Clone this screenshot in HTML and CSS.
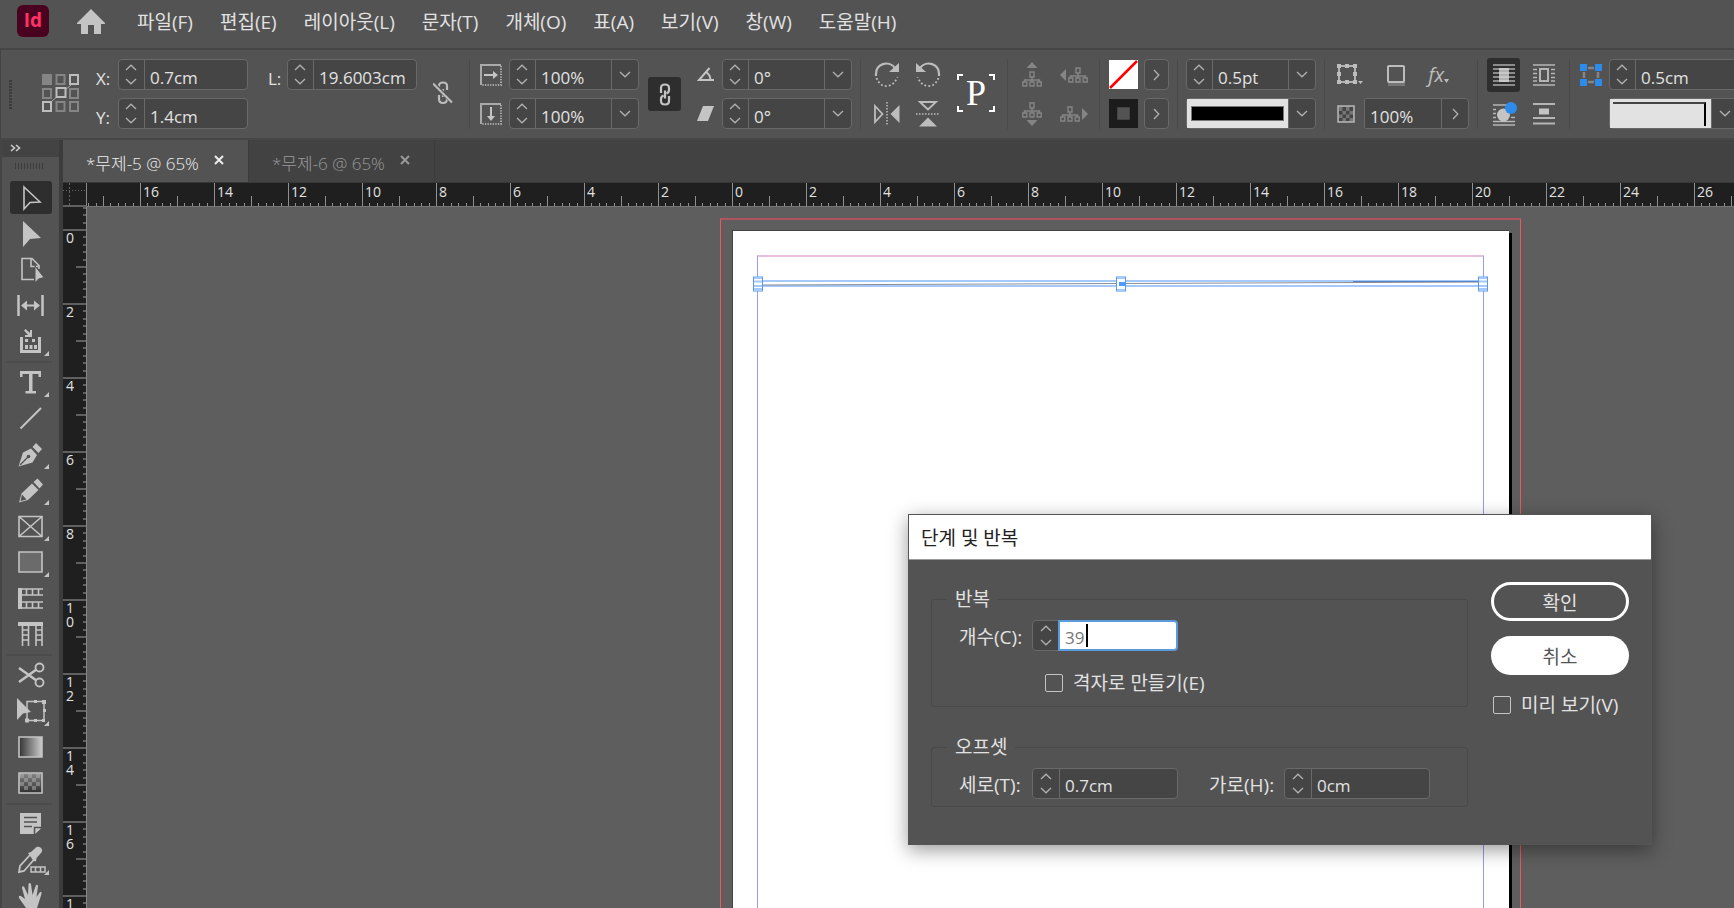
FILE: index.html
```html
<!DOCTYPE html>
<html lang="ko">
<head>
<meta charset="utf-8">
<title>단계 및 반복</title>
<link rel="stylesheet" href="styles.css">
</head>
<body>
<svg class="defs" aria-hidden="true">
  <symbol id="up" viewBox="0 0 12 7"><path d="M1 6L6 1.2L11 6" fill="none" stroke="currentColor" stroke-width="1.3"/></symbol>
  <symbol id="down" viewBox="0 0 12 7"><path d="M1 1L6 5.8L11 1" fill="none" stroke="currentColor" stroke-width="1.3"/></symbol>
  <symbol id="right" viewBox="0 0 7 12"><path d="M1 1L5.8 6L1 11" fill="none" stroke="currentColor" stroke-width="1.3"/></symbol>
  <symbol id="tree" viewBox="0 0 20 16"><path d="M8 1h4v5H8zM10 6v5M2.500 11V9h15v2M.8 11h4v4h-4zM8 11h4v4H8zM15.200 11h4v4h-4z" fill="none" stroke="currentColor" stroke-width="1.4"/></symbol>
  <symbol id="corner" viewBox="0 0 42 33"><path d="M39 26v5h-5z" fill="currentColor"/></symbol>
  <symbol id="close" viewBox="0 0 10 10"><path d="M1 1L9 9M9 1L1 9" stroke="currentColor" stroke-width="2"/></symbol>
</svg>

<header class="menubar">
  <div class="logo">Id</div>
  <button class="home" aria-label="홈"><svg width="28" height="25" viewBox="0 0 28 25"><path d="M14 0L28 14V15H24V25H17V16H11V25H4V15H0V14Z" fill="currentColor"/></svg></button>
  <nav class="menus">
    <button>파일(F)</button><button>편집(E)</button><button>레이아웃(L)</button><button>문자(T)</button><button>개체(O)</button><button>표(A)</button><button>보기(V)</button><button>창(W)</button><button>도움말(H)</button>
  </nav>
</header>

<section class="control">
  <div class="grip"></div>
  <svg class="refpoint" width="38" height="39" viewBox="0 0 38 39" fill="none" stroke-width="2">
    <path d="M10 27L29 11" stroke="#aaa" stroke-width="1"/>
    <g stroke="#858585" fill="#535353"><rect x="1" y="1" width="8" height="9" fill="#858585"/><rect x="14.500" y="1" width="8" height="9"/><rect x="1" y="15" width="8" height="9"/><rect x="28" y="15" width="8" height="9"/><rect x="14.500" y="28" width="8" height="9"/><rect x="28" y="28" width="8" height="9"/></g>
    <g stroke="#bdbdbd" fill="#535353"><rect x="28" y="1" width="8" height="9"/><rect x="14.500" y="14" width="9" height="9"/><rect x="1" y="28" width="8" height="9"/></g>
  </svg>
  <div class="group g-pos">
    <label for="x">X:</label>
    <div class="field"><div class="spin"><button aria-label="X 증가"><svg><use href="#up"/></svg></button><button aria-label="X 감소"><svg><use href="#down"/></svg></button></div><input id="x" value="0.7cm"></div>
    <label for="y">Y:</label>
    <div class="field"><div class="spin"><button aria-label="Y 증가"><svg><use href="#up"/></svg></button><button aria-label="Y 감소"><svg><use href="#down"/></svg></button></div><input id="y" value="1.4cm"></div>
  </div>
  <div class="group g-len">
    <label for="l">L:</label>
    <div class="field"><div class="spin"><button aria-label="L 증가"><svg><use href="#up"/></svg></button><button aria-label="L 감소"><svg><use href="#down"/></svg></button></div><input id="l" value="19.6003cm"></div>
  </div>
  <button class="bare unlink" aria-label="비율 유지 안 함"><svg width="20" height="24" viewBox="0 0 20 24" fill="none" stroke="currentColor" stroke-width="2.200"><path d="M6 9V5Q6 1.500 10 1.500T14 5V9M6 14v4q0 4 4 4t4-4v-4M10 8v8"/><path d="M0 2L19 21" stroke="#535353" stroke-width="4"/><path d="M0 2.500L19 21.500"/></svg></button>
  <div class="sep s-len"></div>
  <div class="group g-scale">
    <svg width="22" height="22" viewBox="0 0 22 22"><path d="M1 21V1H21" fill="none" stroke="#aaa" stroke-width="2"/><path d="M21 2V21H2" fill="none" stroke="#aaa" stroke-width="2" stroke-dasharray="1.300 1.300"/><path d="M4 10h9V7l5 4-5 4v-3H4z" fill="#c4c4c4"/></svg>
    <div class="field"><div class="spin"><button aria-label="가로 비율 증가"><svg><use href="#up"/></svg></button><button aria-label="가로 비율 감소"><svg><use href="#down"/></svg></button></div><input aria-label="X 비율" value="100%"><button class="drop" aria-label="가로 비율 목록"><svg><use href="#down"/></svg></button></div>
    <svg width="22" height="22" viewBox="0 0 22 22"><path d="M1 21V1H21" fill="none" stroke="#aaa" stroke-width="2"/><path d="M21 2V21H2" fill="none" stroke="#aaa" stroke-width="2" stroke-dasharray="1.300 1.300"/><path d="M10 4v9H7l4 5 4-5h-3V4z" fill="#c4c4c4"/></svg>
    <div class="field"><div class="spin"><button aria-label="세로 비율 증가"><svg><use href="#up"/></svg></button><button aria-label="세로 비율 감소"><svg><use href="#down"/></svg></button></div><input aria-label="Y 비율" value="100%"><button class="drop" aria-label="세로 비율 목록"><svg><use href="#down"/></svg></button></div>
  </div>
  <button class="on link" aria-label="비율 유지"><svg width="12" height="23" viewBox="0 0 12 23" fill="none" stroke="currentColor" stroke-width="2.200"><path d="M2 10V5Q2 1.500 6 1.500T10 5V7Q10 9.500 7.500 10.500M10 13v5q0 3.500-4 3.500T2 18v-2q0-2.500 2.500-3.500M6 7.500v8"/></svg></button>
  <div class="group g-angle">
    <svg width="18" height="15" viewBox="0 0 18 15" fill="none" stroke="#c4c4c4" stroke-width="2"><path d="M17 13H2L12.500 1M9 5Q13.500 8 13.500 13"/></svg>
    <div class="field"><div class="spin"><button aria-label="회전 증가"><svg><use href="#up"/></svg></button><button aria-label="회전 감소"><svg><use href="#down"/></svg></button></div><input aria-label="회전 각도" value="0°"><button class="drop" aria-label="회전 목록"><svg><use href="#down"/></svg></button></div>
    <svg width="18" height="15" viewBox="0 0 18 15"><path d="M6 0H17L11 15H0Z" fill="#c4c4c4"/></svg>
    <div class="field"><div class="spin"><button aria-label="기울이기 증가"><svg><use href="#up"/></svg></button><button aria-label="기울이기 감소"><svg><use href="#down"/></svg></button></div><input aria-label="기울이기 각도" value="0°"><button class="drop" aria-label="기울이기 목록"><svg><use href="#down"/></svg></button></div>
  </div>
  <div class="sep s-angle"></div>
  <div class="group g-rotate">
    <button class="bare" aria-label="시계 방향 회전"><svg width="26" height="26" viewBox="0 0 26 26" fill="none" stroke="currentColor" stroke-width="2.200"><path d="M2 14C1 1 15-2 21 6"/><path d="M25 1V10H15Z" fill="currentColor" stroke="none"/><path d="M2.500 16Q6 24.500 13 24T23.500 15" stroke-width="1.800" stroke-dasharray="1.800 2.200"/></svg></button>
    <button class="bare" aria-label="시계 반대 방향 회전"><svg width="26" height="26" viewBox="0 0 26 26"><g transform="matrix(-1 0 0 1 26 0)" fill="none" stroke="currentColor" stroke-width="2.200"><path d="M2 14C1 1 15-2 21 6"/><path d="M25 1V10H15Z" fill="currentColor" stroke="none"/><path d="M2.500 16Q6 24.500 13 24T23.500 15" stroke-width="1.800" stroke-dasharray="1.800 2.200"/></g></svg></button>
    <button class="bare" aria-label="가로로 뒤집기"><svg width="26" height="26" viewBox="0 0 26 26"><path d="M1 5L8.500 13L1 21Z" fill="none" stroke="currentColor" stroke-width="1.800"/><path d="M25.500 4V22L16.500 13Z" fill="currentColor"/><path d="M13 1V25" stroke="currentColor" stroke-width="1.500" stroke-dasharray="1.500 1.500"/></svg></button>
    <button class="bare" aria-label="세로로 뒤집기"><svg width="26" height="26" viewBox="0 0 26 26"><path d="M5 1L13 8.500L21 1Z" fill="none" stroke="currentColor" stroke-width="1.800"/><path d="M4 25.500H22L13 16.500Z" fill="currentColor"/><path d="M1 13H25" stroke="currentColor" stroke-width="1.500" stroke-dasharray="1.500 1.500"/></svg></button>
  </div>
  <div class="pmark"><span>P</span><svg width="38" height="38" viewBox="0 0 38 38" fill="none" stroke="#fff" stroke-width="2"><path d="M1 6V1H6M32 1H37V6M37 32V37H32M6 37H1V32"/></svg></div>
  <div class="sep s-p"></div>
  <div class="group g-tree">
    <button class="bare dim" aria-label="컨테이너 선택"><svg width="20" height="26" viewBox="0 0 20 26"><path d="M10 0L15.500 6H4.500Z" fill="currentColor"/><use href="#tree" y="9" width="20" height="16"/></svg></button>
    <button class="bare dim" aria-label="이전 개체 선택"><svg width="28" height="18" viewBox="0 0 28 18"><path d="M0 9L6 3V15Z" fill="currentColor"/><use href="#tree" x="8" y="1" width="20" height="16"/></svg></button>
    <button class="bare dim" aria-label="내용 선택"><svg width="20" height="26" viewBox="0 0 20 26"><path d="M10 25L15.500 19H4.500Z" fill="currentColor"/><use href="#tree" y="1" width="20" height="16"/></svg></button>
    <button class="bare dim" aria-label="다음 개체 선택"><svg width="28" height="18" viewBox="0 0 28 18"><path d="M28 9L22 3V15Z" fill="currentColor"/><use href="#tree" y="1" width="20" height="16"/></svg></button>
  </div>
  <div class="sep s-tree"></div>
  <div class="group g-paint">
    <button class="swatch" aria-label="칠"><svg width="29" height="29" viewBox="0 0 29 29"><path d="M0 0H29V29H0Z" fill="#fff"/><path d="M1 28L28 1" stroke="#f00" stroke-width="2.500"/></svg></button>
    <button class="more" aria-label="칠 옵션"><svg><use href="#right"/></svg></button>
    <button class="swatch" aria-label="획"><svg width="29" height="29" viewBox="0 0 29 29"><path d="M0 0H29V29H0Z" fill="#1c1c1c"/><path d="M8.500 8.500H20.500V20.500H8.500Z" fill="#535353" stroke="#444"/></svg></button>
    <button class="more" aria-label="획 옵션"><svg><use href="#right"/></svg></button>
  </div>
  <div class="sep s-paint"></div>
  <div class="group g-stroke">
    <div class="field"><div class="spin"><button aria-label="두께 증가"><svg><use href="#up"/></svg></button><button aria-label="두께 감소"><svg><use href="#down"/></svg></button></div><input aria-label="획 두께" value="0.5pt"><button class="drop" aria-label="두께 목록"><svg><use href="#down"/></svg></button></div>
    <div class="field"><div class="preview"><div class="solid"></div></div><button class="drop" aria-label="획 유형"><svg><use href="#down"/></svg></button></div>
  </div>
  <div class="sep s-stroke"></div>
  <div class="effects">
    <div class="fxrow">
      <button class="bare" aria-label="효과 대상"><svg width="26" height="22" viewBox="0 0 26 22"><rect x="2" y="2" width="16" height="16" fill="none" stroke="currentColor" stroke-width="1.800"/><path d="M0 0h4v4H0zM8 0h4v4H8zM16 0h4v4h-4zM0 8h4v4H0zM16 8h4v4h-4zM0 16h4v4H0zM8 16h4v4H8zM16 16h4v4h-4z" fill="currentColor"/><path d="M4 4H16V16H4Z" fill="#535353"/><path d="M21 17h5l-2.500 3z" fill="currentColor"/></svg></button>
      <button class="bare" aria-label="그림자"><svg width="20" height="22" viewBox="0 0 20 22"><path d="M2 18H19V22H2z" fill="#777"/><rect x="2" y="2" width="16" height="16" rx="1" fill="#535353" stroke="currentColor" stroke-width="2"/></svg></button>
      <button class="bare fx" aria-label="효과"><i>fx</i><svg width="5" height="4" viewBox="0 0 5 4"><path d="M0 0h5l-2.500 4z" fill="currentColor"/></svg></button>
    </div>
    <div class="fxrow">
      <svg width="18" height="18" viewBox="0 0 18 18"><rect x="1" y="1" width="16" height="16" fill="#777" stroke="#b5b5b5" stroke-width="1.500"/><path d="M5.500 2h3.500v4H5.500zM12.500 2H16v4h-3.500zM2 6h3.500v3.500H2zM9 6h3.500v3.500H9zM5.500 9.500H9V13H5.500zM12.500 9.500H16V13h-3.500zM2 13h3.500v3H2zM9 13h3.500v3H9z" fill="#444"/></svg>
      <div class="field f-op"><input aria-label="불투명도" value="100%"><button class="drop" aria-label="불투명도 조절"><svg class="r"><use href="#right"/></svg></button></div>
    </div>
  </div>
  <div class="sep s-fx"></div>
  <div class="group g-wrap">
    <button class="on" aria-label="감싸기 없음"><svg width="22" height="22" viewBox="0 0 22 22"><path d="M0 1H22M0 5H22M0 9H22M0 13H22M0 17H22M0 21H22" stroke="#aaa" stroke-width="1.600"/><path d="M6 5H16M6 9H16M6 13H16M6 17H16M6 7H16M6 11H16M6 15H16" stroke="#ddd" stroke-width="1.300"/></svg></button>
    <button class="bare" aria-label="테두리 감싸기"><svg width="22" height="22" viewBox="0 0 22 22"><path d="M0 1H22M0 21H22M0 5.500H4M0 9.500H4M0 13.500H4M0 17H4M18 5.500H22M18 9.500H22M18 13.500H22M18 17H22" stroke="#b5b5b5" stroke-width="1.600"/><rect x="7" y="5" width="8" height="12" fill="none" stroke="#b5b5b5" stroke-width="2"/></svg></button>
    <button class="bare" aria-label="모양 감싸기"><svg width="26" height="25" viewBox="0 0 26 25"><path d="M2 4H16M2 8.500H5M2 12.500H5M2 16.500H5M2 20.500H24M2 24H24M20 16.500H24" stroke="#b5b5b5" stroke-width="1.600"/><circle cx="12.500" cy="14" r="6.500" fill="#c4c4c4"/><circle cx="20" cy="7" r="6" fill="#2d8ceb"/></svg></button>
    <button class="bare" aria-label="개체 건너뛰기"><svg width="22" height="22" viewBox="0 0 22 22"><path d="M0 1H22M0 15H22M0 20.500H22" stroke="#b5b5b5" stroke-width="2"/><path d="M6 5.500h10v6H6z" fill="#c4c4c4"/></svg></button>
  </div>
  <div class="sep s-wrap"></div>
  <svg class="cornerico" width="22" height="22" viewBox="0 0 22 22"><path d="M8 4h6M8 18h6M4 8v6M18 8v6" stroke="#858585" stroke-width="2.500"/><path d="M0 0h7v7H0zM15 0h7v7h-7zM0 15h7v7H0zM15 15h7v7h-7z" fill="#2d8ceb"/></svg>
  <div class="group g-corner">
    <div class="field wide"><div class="spin"><button aria-label="모퉁이 증가"><svg><use href="#up"/></svg></button><button aria-label="모퉁이 감소"><svg><use href="#down"/></svg></button></div><input aria-label="모퉁이 크기" value="0.5cm"></div>
    <div class="field"><div class="preview"><div class="bend"></div></div><button class="drop" aria-label="모퉁이 모양"><svg><use href="#down"/></svg></button></div>
  </div>
</section>

<main class="workspace">
  <aside class="tools">
    <div class="toolhead"><svg width="11" height="8" viewBox="0 0 11 8"><path d="M1 1L4.500 4L1 7M6 1L9.500 4L6 7" fill="none" stroke="#ccc" stroke-width="1.600"/></svg></div>
    <div class="toolgrip"></div>
    <div class="toollist">
      <button class="active" aria-label="선택 도구"><svg viewBox="0 0 42 33"><path d="M14 6V28L20 21.500L30 21Z" fill="none" stroke="currentColor" stroke-width="1.600"/></svg></button>
      <button aria-label="직접 선택 도구"><svg viewBox="0 0 42 33"><path d="M13 4V30L20 22L31 21Z" fill="currentColor"/></svg></button>
      <button aria-label="페이지 도구"><svg viewBox="0 0 42 33"><path d="M24 26.500H12V5.500H22L29 12.500V16M21 5.500V13.500H29" fill="none" stroke="currentColor" stroke-width="1.600"/><path d="M25 13V30L28.500 26L34 24.500Z" fill="currentColor" stroke="#535353"/></svg></button>
      <button aria-label="간격 도구"><svg viewBox="0 0 42 33"><path d="M8.500 6V27M32.500 6V27" stroke="currentColor" stroke-width="2.500"/><path d="M11 16.500L17 11.500V15.500H24V11.500L30 16.500L24 21.500V17.500H17V21.500Z" fill="currentColor"/></svg></button>
      <button aria-label="내용 수집 도구"><svg viewBox="0 0 42 33"><path d="M11.500 12V26.500H29.500V12" fill="none" stroke="currentColor" stroke-width="3"/><path d="M15 14h3v3h-3zM22 14h3v3h-3zM15 20h3v4h-3zM19.500 20h3v4h-3zM24 20h3v4h-3zM14 5.500L15.500 4L20 8V5H22V12H15V10H18Z" fill="currentColor"/><use href="#corner"/></svg></button>
      <hr>
      <button aria-label="문자 도구"><svg viewBox="0 0 42 33"><path d="M10 5H31V11H28.500V8H22.500V25H26V27.500H15.500V25H19V8H12.500V11H10Z" fill="currentColor"/><use href="#corner"/></svg></button>
      <button aria-label="선 도구"><svg viewBox="0 0 42 33"><path d="M10.500 26.500L31 6" stroke="currentColor" stroke-width="2"/></svg></button>
      <button aria-label="펜 도구"><svg viewBox="0 0 42 33"><path d="M8.500 28.500L13 14.500L21 10.500L27 17L22.500 24.500Z" fill="currentColor"/><path d="M10 27L18 19" stroke="#535353" stroke-width="1.300"/><circle cx="18.500" cy="18.500" r="1.800" fill="#535353"/><path d="M22.500 9L26 5L32 11L28.500 15Z" fill="currentColor"/><use href="#corner"/></svg></button>
      <button aria-label="연필 도구"><svg viewBox="0 0 42 33"><path d="M9 28.500L11.500 19.500L22 9.500L28.500 16L18 26Z" fill="currentColor"/><path d="M12 20.500L16.500 25.500L10.500 27Z" fill="#535353"/><path d="M23.500 8L27.500 4.500L33 10.500L29.500 14.500Z" fill="currentColor"/><use href="#corner"/></svg></button>
      <button aria-label="사각형 프레임 도구"><svg viewBox="0 0 42 33"><path d="M9 6.500H32V26.500H9ZM9 6.500L32 26.500M32 6.500L9 26.500" fill="none" stroke="currentColor" stroke-width="1.600"/><use href="#corner"/></svg></button>
      <button aria-label="사각형 도구"><svg viewBox="0 0 42 33"><path d="M9 6H32V26H9Z" fill="#6b6b6b" stroke="currentColor" stroke-width="1.600"/><use href="#corner"/></svg></button>
      <button aria-label="가로 격자 도구"><svg viewBox="0 0 42 33"><path d="M8 6H12V27H8Z" fill="currentColor"/><path d="M12 7H33M12 13H33M12 20H33M12 26H33M16.500 7V13M22.500 7V13M28.500 7V13M16.500 20V26M22.500 20V26M28.500 20V26" stroke="currentColor" stroke-width="1.600"/></svg></button>
      <button aria-label="세로 격자 도구"><svg viewBox="0 0 42 33"><path d="M8 4H33V8H8Z" fill="currentColor"/><path d="M12.500 8V28M18.500 8V28M26 8V28M32 8V28M12.500 12H18.500M12.500 17H18.500M12.500 22H18.500M26 12H32M26 17H32M26 22H32" stroke="currentColor" stroke-width="1.600"/></svg></button>
      <hr>
      <button aria-label="가위 도구"><svg viewBox="0 0 42 33" fill="none" stroke="currentColor"><circle cx="29.500" cy="8.500" r="4" stroke-width="1.800"/><circle cx="29.500" cy="23.500" r="4" stroke-width="1.800"/><path d="M9 9L26.500 21.500M9 23L26.500 10.500" stroke-width="2.600"/></svg></button>
      <button aria-label="자유 변형 도구"><svg viewBox="0 0 42 33"><path d="M17 6.500H34V25.500H17Z" fill="none" stroke="currentColor" stroke-width="1.500"/><path d="M15 23.500h4v4h-4zM24 24h3v3h-3zM32 24h3v3h-3zM32 5h4v4h-4zM33 14h3v3h-3zM24 5h3v3h-3z" fill="currentColor"/><path d="M7 3V25L13 18.500L21 17Z" fill="currentColor"/><use href="#corner"/></svg></button>
      <button aria-label="그레이디언트 도구"><svg viewBox="0 0 42 33"><defs><linearGradient id="g1"><stop offset="0" stop-color="#333"/><stop offset="1" stop-color="#ccc"/></linearGradient><linearGradient id="g2" x2="0" y2="1"><stop offset="0" stop-color="#888"/><stop offset="1" stop-color="#2e2e2e"/></linearGradient></defs><path d="M9 6H32V26H9Z" fill="url(#g1)" stroke="currentColor" stroke-width="1.600"/></svg></button>
      <button aria-label="그레이디언트 페더 도구"><svg viewBox="0 0 42 33"><path d="M9 6H32V26H9Z" fill="url(#g2)" stroke="currentColor" stroke-width="1.600"/><path d="M10 7h4v4h-4zM18 7h4v4h-4zM26 7h4v4h-4zM14 11h4v4h-4zM22 11h4v4h-4zM10 15h4v4h-4zM18 15h4v4h-4zM26 15h4v4h-4zM14 19h4v4h-4zM22 19h4v4h-4z" fill="#bbb" opacity=".45"/></svg></button>
      <hr>
      <button aria-label="메모 도구"><svg viewBox="0 0 42 33"><path d="M10 5H31V20L25 26H10Z" fill="currentColor"/><path d="M14 9.500H27M14 14H27M14 18.500H22M24.500 26V19.500H31" stroke="#535353" stroke-width="1.500" fill="none"/><path d="M26 25V21H30.500Z" fill="currentColor"/></svg></button>
      <button aria-label="스포이드 도구"><svg viewBox="0 0 42 33"><path d="M20 11L10 22L9 28L14 27L24 15.500" fill="none" stroke="currentColor" stroke-width="1.800"/><path d="M18 9L21 8L26.500 3Q30 2 31.500 4.500Q33 7 31 9L26.500 14L26 17.500L23.500 17Z" fill="currentColor"/><path d="M21 23H35V28H21ZM25.500 23V28M30.500 23V28" fill="none" stroke="currentColor" stroke-width="1.500"/><use href="#corner"/></svg></button>
      <button aria-label="손 도구"><svg viewBox="0 0 42 33"><path d="M16 28L9 18Q8 15 11 16L15 19L12 8Q12 5.500 14 6.500L18 15L18.500 4Q19.500 2 21 4L22.500 15L26 5Q28 4 28 6.500L26.500 17L30 12Q32 11 31.500 14L27 28Z" fill="currentColor"/></svg></button>
    </div>
  </aside>

  <section class="document">
    <div class="tabs">
      <div class="tab current"><span>*무제-5 @ 65%</span><button aria-label="무제-5 닫기"><svg width="10" height="10"><use href="#close"/></svg></button></div>
      <div class="tab"><span>*무제-6 @ 65%</span><button aria-label="무제-6 닫기"><svg width="10" height="10"><use href="#close"/></svg></button></div>
    </div>
    <div class="view">
      <div class="origin"></div>
      <div class="hruler">
        <svg class="ticks" width="100%" height="24"><defs><pattern id="ht" x="53" width="74" height="24" patternUnits="userSpaceOnUse"><path d="M.5 0V24M37.500 13V24M7.500 20V24M15.500 20V24M22.500 20V24M30.500 20V24M44.500 20V24M52.500 20V24M59.500 20V24M67.500 20V24" stroke="#909090"/></pattern></defs><rect width="100%" height="24" fill="url(#ht)"/></svg>
        <div class="nums"><span>16</span><span>14</span><span>12</span><span>10</span><span>8</span><span>6</span><span>4</span><span>2</span><span>0</span><span>2</span><span>4</span><span>6</span><span>8</span><span>10</span><span>12</span><span>14</span><span>16</span><span>18</span><span>20</span><span>22</span><span>24</span><span>26</span></div>
      </div>
      <div class="vruler">
        <svg class="ticks" width="23" height="100%"><defs><pattern id="vt" y="22" width="23" height="74" patternUnits="userSpaceOnUse"><path d="M0 1H23M13 38H23M20 8H23M20 16H23M20 23H23M20 31H23M20 45H23M20 53H23M20 60H23M20 68H23" stroke="#606060" stroke-width="2"/></pattern></defs><rect width="23" height="100%" fill="url(#vt)"/></svg>
        <div class="nums"><span>0</span><span>2</span><span>4</span><span>6</span><span>8</span><span>10</span><span>12</span><span>14</span><span>16</span><span>18</span></div>
      </div>
      <div class="canvas">
        <div class="bleed"></div>
        <div class="page"></div>
        <div class="margins"></div>
        <svg class="selection" width="736" height="16" viewBox="0 0 736 16">
          <path d="M5 5H731M5 10H731" stroke="#a5c9fb" stroke-width="2"/>
          <path d="M10 9L731 6" stroke="#8a8d96" stroke-width="1"/>
          <path d="M600 5.500H726" stroke="#5a84c4" stroke-width="1"/>
          <g fill="#fff" stroke="#5599f5"><rect x=".5" y="1" width="9" height="14"/><rect x="363.500" y="1" width="9" height="14"/><rect x="725.500" y="1" width="9" height="14"/></g>
          <path d="M1 2H9M1 5.500H9M1 10H9M1 13H9M726 2H734M726 5.500H734M726 10H734M726 13H734M364 2H372M364 14H372" stroke="#a5c9fb" stroke-width="2"/>
          <path d="M366 6H372V10H366Z" fill="#4f9bff"/>
        </svg>
      </div>
    </div>
  </section>
</main>

<form class="dialog" role="dialog" aria-labelledby="dt">
  <h1 id="dt">단계 및 반복</h1>
  <div class="dbody">
    <div class="sets">
      <fieldset class="repeat">
        <legend>반복</legend>
        <div class="line"><label for="cnt">개수(C):</label>
          <div class="field focus"><div class="spin"><button type="button" aria-label="개수 증가"><svg><use href="#up"/></svg></button><button type="button" aria-label="개수 감소"><svg><use href="#down"/></svg></button></div><input id="cnt" value="39"><span class="caret"></span></div></div>
        <label class="check"><input type="checkbox">격자로 만들기(E)</label>
      </fieldset>
      <fieldset class="offset">
        <legend>오프셋</legend>
        <div class="line"><label for="ov">세로(T):</label>
          <div class="field"><div class="spin"><button type="button" aria-label="세로 증가"><svg><use href="#up"/></svg></button><button type="button" aria-label="세로 감소"><svg><use href="#down"/></svg></button></div><input id="ov" value="0.7cm"></div>
          <label class="second" for="oh">가로(H):</label>
          <div class="field"><div class="spin"><button type="button" aria-label="가로 증가"><svg><use href="#up"/></svg></button><button type="button" aria-label="가로 감소"><svg><use href="#down"/></svg></button></div><input id="oh" value="0cm"></div></div>
      </fieldset>
    </div>
    <div class="actions">
      <button type="button" class="pill ok">확인</button>
      <button type="button" class="pill">취소</button>
      <label class="check"><input type="checkbox">미리 보기(V)</label>
    </div>
  </div>
</form>
</body>
</html>
```
FILE: styles.css
```css
* { box-sizing: border-box; }
body {
  margin: 0;
  height: 100vh;
  display: flex;
  flex-direction: column;
  overflow: hidden;
  position: relative;
  background: #535353;
  color: #e2e2e2;
  font: 17px "Open Sans", "Noto Sans CJK KR", sans-serif;
}
button, input { font: inherit; color: inherit; margin: 0; padding: 0; border: 0; background: none; }
button { display: flex; align-items: center; justify-content: center; }
input { min-width: 0; border-radius: 0; outline: 0; }
svg { display: block; flex: none; }
.defs { position: absolute; width: 0; height: 0; }

/* menu bar */
.menubar { flex: none; height: 50px; display: flex; align-items: center; border-bottom: 2px solid #464646; padding: 0 0 6px 17px; }
.logo { width: 32px; height: 32px; margin-bottom: 1px; border-radius: 6px; background: #49021f; color: #ff3366; font-weight: 700; font-size: 19px; line-height: 30px; text-align: center; }
.home { margin-left: 28px; color: #c4c4c4; }
.menus { display: flex; gap: 27px; margin-left: 32px; font-size: 19px; white-space: nowrap; }

/* control bar */
.control { flex: none; height: 90px; display: flex; align-items: flex-start; padding: 9px 0 0 8px; border-bottom: 2px solid #474747; border-left: 1px solid #454545; overflow: hidden; }
.control > * { flex: none; }
.grip { width: 3px; height: 30px; margin-top: 21px; background: repeating-linear-gradient(#3c3c3c 0 2px, #535353 2px 3px); }
.refpoint { margin: 15px 0 0 30px; }
.group { display: grid; grid-auto-rows: 31px; row-gap: 8px; align-items: center; justify-items: start; }
.g-pos { grid-template-columns: 22px 130px; margin-left: 16px; }
.g-len { grid-template-columns: 19px 130px; margin-left: 20px; }
.g-pos label, .g-len label { padding-top: 7px; }
.field { display: flex; height: 31px; width: 130px; border: 1px solid #696969; border-radius: 4px; background: #454545; position: relative; }
.field input { flex: 1; padding: 5px 0 0 5px; border-left: 1px solid #696969; }
.spin { width: 25px; flex: none; display: flex; flex-direction: column; padding-right: 2px; color: #b0b0b0; }
.spin button { flex: 1; }
.spin svg, .drop svg { width: 12px; height: 7px; }
.drop { width: 27px; flex: none; border-left: 1px solid #696969; color: #b0b0b0; }
.drop svg.r, .more svg { width: 7px; height: 12px; }
.bare { color: #bdbdbd; }
.dim { color: #858585; }
.on { background: #2e2e2e; border-radius: 3px; color: #c4c4c4; width: 33px; height: 34px; }
.unlink { margin: 22px 0 0 16px; }
.sep { width: 1px; height: 70px; background: #4a4a4a; }
.s-len { margin: 0 0 0 16px; }
.g-scale { grid-template-columns: 29px 130px; margin-left: 10px; }
.link { margin: 18px 0 0 9px; }
.g-angle { grid-template-columns: 25px 130px; margin-left: 16px; }
.s-angle { margin-left: 8px; }
.g-rotate { grid-template-columns: 26px 26px; column-gap: 15px; margin-left: 13px; }
.pmark { display: grid; place-items: center; width: 38px; height: 38px; margin: 15px 0 0 16px; color: #fff; font: 36px/38px "Liberation Serif", serif; }
.pmark > * { grid-area: 1 / 1; }
.s-p { margin-left: 12px; }
.g-tree { grid-template-columns: 38px 28px; margin-left: 14px; }
.s-tree { margin-left: 11px; }
.g-paint { grid-template-columns: 29px 25px; column-gap: 6px; margin-left: 9px; }
.more { width: 25px; height: 31px; border: 1px solid #696969; border-radius: 4px; color: #b0b0b0; background: #484848; }
.s-paint { margin-left: 8px; }
.g-stroke { margin-left: 8px; }
.preview { flex: 1; background: #e2e2e2; padding: 8px 5px; }
.solid { height: 13px; background: #000; outline: 1px solid #777; }
.bend { height: 24px; margin: -5px 0 0 -2px; border: solid #000; border-width: 2px 2px 0 0; border-top-color: #444; }
.s-stroke { margin-left: 8px; }
.effects { margin-left: 12px; display: grid; grid-auto-rows: 31px; row-gap: 8px; }
.fxrow { display: flex; align-items: center; justify-content: space-between; width: 132px; }
.f-op { width: 105px; border-radius: 2px 4px 4px 2px; }
.f-op input { border-left: 0; }
.fxrow .bare:last-child { margin-right: 20px; }
.fx { align-items: flex-end; font-size: 20px; line-height: 24px; }
.fx svg { margin-bottom: 4px; }
.s-fx { margin-left: 8px; }
.g-wrap { grid-template-columns: 33px 22px; column-gap: 13px; margin-left: 9px; }
.g-wrap .bare { justify-self: center; }
.s-wrap { margin-left: 14px; }
.cornerico { margin: 5px 7px 0 10px; }
.g-corner .wide { width: 145px; }

/* workspace */
.workspace { flex: 1; min-height: 0; display: flex; }
.tools { flex: none; width: 63px; border-left: 2px solid #454545; border-right: 4px solid #3c3c3c; overflow: hidden; }
.toolhead { height: 17px; background: #434343; padding: 4px 0 0 8px; }
.toolgrip { width: 28px; height: 6px; margin: 6px auto 12px 13px; background: repeating-linear-gradient(90deg, #3c3c3c 0 1px, #535353 1px 3px); }
.toollist { display: flex; flex-direction: column; align-items: flex-start; gap: 3px; padding-left: 8px; }
.toollist button { width: 42px; height: 33px; border-radius: 3px; color: #c4c4c4; flex: none; }
.toollist svg { width: 42px; height: 33px; }
.toollist .active { background: #2e2e2e; }
.toollist hr { flex: none; width: 46px; height: 2px; margin: 0 0 0 -4px; border: 0; background: #4c4c4c; }
.document { flex: 1; min-width: 0; display: flex; flex-direction: column; }
.tabs { flex: none; height: 43px; display: flex; background: #424242; border-bottom: 1px solid #383838; }
.tab { min-width: 186px; display: flex; align-items: center; justify-content: space-between; gap: 13px; padding: 2px 24px 0 23px; color: #999; border-right: 1px solid #3c3c3c; font-weight: 300; white-space: nowrap; }
.tab button { margin-bottom: 4px; }
.tab.current { background: #535353; color: #eee; }
.view { flex: 1; min-height: 0; display: grid; grid-template: 24px 1fr / 24px 1fr; background: #5e5e5e; font-size: 14px; }
.origin { background: repeating-linear-gradient(90deg, #666 0 1px, transparent 1px 3px) 0 7px / 100% 1px no-repeat, repeating-linear-gradient(#666 0 2px, transparent 2px 4px) 6px 0 / 1px 100% no-repeat, #1f1f1f; border-right: 1px solid #888; border-bottom: 2px solid #606060; }
.hruler, .vruler { display: grid; overflow: hidden; background: #1f1f1f; min-width: 0; min-height: 0; }
.hruler { border-bottom: 1px solid #777; }
.vruler { border-right: 1px solid #888; }
.hruler > *, .vruler > * { grid-area: 1 / 1; }
.nums { display: flex; }
.hruler .nums { padding-left: 53px; line-height: 18px; }
.hruler span { flex: none; width: 74px; padding-left: 3px; }
.vruler .nums { flex-direction: column; padding-top: 22px; line-height: 14px; }
.vruler span { flex: none; width: 11px; height: 74px; margin-left: 3px; padding-top: 2px; word-break: break-all; }
.canvas { position: relative; overflow: hidden; }
.bleed { position: absolute; left: 633px; top: 11px; bottom: -20px; width: 801px; border: 1px solid #f05565; border-top: 2px solid #b05560; }
.page { position: absolute; left: 645px; top: 23px; bottom: -20px; width: 777px; background: #fff; border: 1px solid #444; border-right: 0; box-shadow: 3px 3px 0 #000; }
.margins { position: absolute; left: 670px; top: 48px; bottom: -20px; width: 727px; border: 1px solid #9a9aee; border-top: 2px solid #e8c0dd; }
.selection { position: absolute; left: 666px; top: 69px; }

/* step and repeat window */
.dialog { position: absolute; left: 908px; top: 514px; width: 744px; border: 1px solid #555; background: #535353; font-size: 19px; line-height: 24px; box-shadow: 0 5px 18px rgba(0, 0, 0, .4); }
.dialog h1 { margin: 0; height: 45px; padding: 1px 12px 0; background: #fff; border-bottom: 1px solid #999; color: #222; font-size: 19px; font-weight: 400; line-height: 45px; }
.dbody { display: flex; gap: 23px; padding: 27px 22px 37px 22px; }
.sets { flex: 1; display: flex; flex-direction: column; gap: 28px; }
fieldset { margin: 0; min-width: 0; border: 1px solid #494949; border-radius: 3px; padding: 9px 12px 7px 27px; }
.repeat { padding-bottom: 11px; }
legend { padding: 0 8px; margin-left: -12px; }
.line { display: flex; align-items: center; }
.line label { width: 73px; white-space: nowrap; padding-top: 3px; }
.line .second { margin-left: 31px; width: 75px; }
.dialog .field { width: 146px; font-size: 17px; }
.dialog .spin { width: 26px; padding-right: 0; }
.focus input { margin: -1px; background: #fff; color: #777; border: 2px solid #5b9bdb; border-radius: 0 4px 4px 0; }
.caret { position: absolute; left: 53px; top: 3px; width: 2px; height: 23px; background: #000; }
.check { display: flex; align-items: center; gap: 10px; white-space: nowrap; }
.check input { appearance: none; width: 18px; height: 18px; border: 1px solid #c4c4c4; border-radius: 2px; }
.repeat .check { margin: 20px 0 0 86px; }
.actions { flex: none; width: 138px; display: flex; flex-direction: column; gap: 15px; margin-top: -5px; }
.pill { height: 39px; border-radius: 20px; background: #fff; color: #555; padding-top: 2px; }
.pill.ok { background: none; color: #e2e2e2; border: 3px solid #fff; }
.actions .check { padding: 3px 0 0 2px; }
```
